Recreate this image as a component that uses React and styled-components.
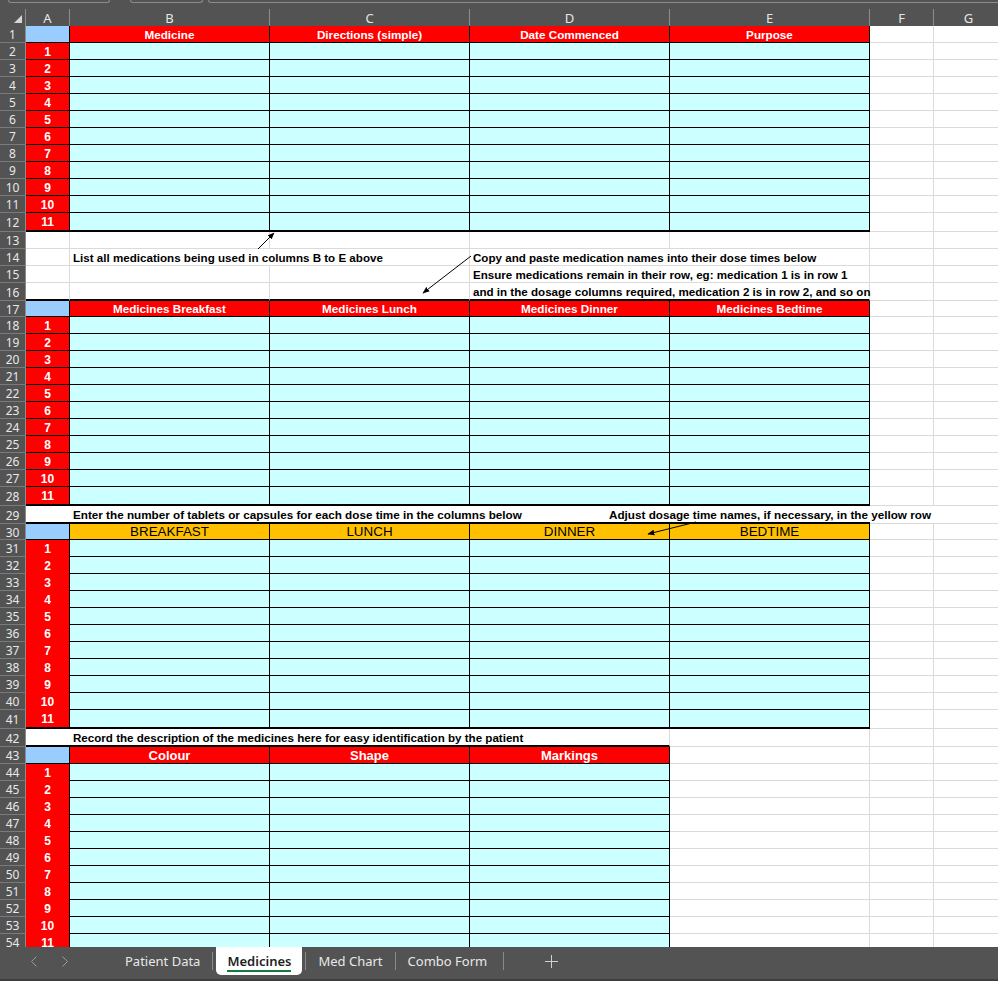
import React from 'react';
import styled, { createGlobalStyle } from 'styled-components';

// row-header | A | B | C | D | E | F | G
const GRID = '26px 44px 200px 200px 200px 200px 64px 70px';
const GRIDLINE = '#dadada';
const INK = '#000000';
const CHROME = '#535353';

const edge = (kind) => {
  if (kind === 'thick') return `2px solid ${INK}`;
  if (kind === 'thin') return `1px solid ${INK}`;
  if (kind === 'grid') return `1px solid ${GRIDLINE}`;
  return 'none';
};

const GlobalStyle = createGlobalStyle`
  html, body { margin: 0; padding: 0; background: #ffffff; overflow: hidden; }
  *, *::before, *::after { box-sizing: border-box; }
`;

const Workbook = styled.div`
  position: relative;
  width: 998px;
  height: 981px;
  overflow: hidden;
  display: flex;
  flex-direction: column;
  background: ${CHROME};
  font-family: "Liberation Sans", Arial, sans-serif;
  line-height: 1;
`;

/* lower lips of the name box / formula bar fields above the grid */
const FormulaEdge = styled.div`
  height: 9px;
  flex: none;
  display: flex;
  align-items: flex-start;
  padding-left: 8px;
  overflow: hidden;
`;

const FieldLip = styled.div`
  flex: ${(p) => (p.$w ? `0 0 ${p.$w}px` : '1 0 auto')};
  margin-left: ${(p) => p.$gap || 0}px;
  margin-right: ${(p) => (p.$w ? 0 : -12)}px;
  height: 3px;
  border: 1px solid #8b8b8b;
  border-top: none;
  border-radius: 0 0 5px 5px;
`;

const ColumnBar = styled.div`
  height: 17px;
  flex: none;
  display: grid;
  grid-template-columns: ${GRID};
  grid-template-rows: 17px;
  font-family: "Noto Sans", "Open Sans", sans-serif;
`;

const Corner = styled.div`
  display: flex;
  align-items: flex-end;
  justify-content: flex-end;
  padding: 0 3px 3px 0;
  border-right: 1px solid #8b8b8b;
`;

const ColLetter = styled.div`
  display: flex;
  align-items: center;
  justify-content: center;
  padding-top: 1px;
  color: #e6e6e6;
  font-size: 13px;
  border-right: 1px solid #8b8b8b;
`;

const Sheet = styled.div`
  flex: 1 1 auto;
  min-height: 0;
  overflow: hidden;
  background: #ffffff;
  display: flex;
  flex-direction: column;
`;

const SheetRow = styled.div`
  flex: none;
  display: grid;
  grid-template-columns: ${GRID};
  grid-template-rows: ${(p) => p.$h}px;
  height: ${(p) => p.$h}px;
`;

const RowHead = styled.div`
  min-height: 0;
  background: ${CHROME};
  color: #e8e8e8;
  font-family: "Noto Sans", "Open Sans", sans-serif;
  font-size: 12px;
  display: flex;
  align-items: center;
  justify-content: center;
  padding-top: 2px;
  border-right: 1px solid #8b8b8b;
  border-bottom: 1px solid #7a7a7a;
`;

const INDEX_FILL = { head: '#99ccff', mark: '#ff0000', blank: '#ffffff' };

const IndexCell = styled.div`
  min-height: 0;
  background: ${(p) => INDEX_FILL[p.$tone]};
  color: #ffffff;
  font-weight: 700;
  font-size: 12px;
  display: flex;
  align-items: center;
  justify-content: center;
  padding-top: 1px;
  border-right: ${(p) => edge(p.$right || 'thin')};
  border-bottom: ${(p) => edge(p.$bottom)};
`;

const HEAD_TONE = {
  red: { bg: '#ff0000', fg: '#ffffff', size: 11.7, weight: 700 },
  big: { bg: '#ff0000', fg: '#ffffff', size: 13, weight: 700 },
  gold: { bg: '#ffc000', fg: '#000000', size: 13.4, weight: 400 },
};

const HeadCell = styled.div`
  min-height: 0;
  background: ${(p) => HEAD_TONE[p.$tone].bg};
  color: ${(p) => HEAD_TONE[p.$tone].fg};
  font-size: ${(p) => HEAD_TONE[p.$tone].size}px;
  font-weight: ${(p) => HEAD_TONE[p.$tone].weight};
  display: flex;
  align-items: center;
  justify-content: center;
  padding-top: 1px;
  white-space: nowrap;
  border-right: 1px solid ${INK};
  border-bottom: 1px solid ${INK};
`;

const EntryCell = styled.div`
  min-height: 0;
  background: #ccffff;
  border-right: 1px solid ${INK};
  border-bottom: ${(p) => edge(p.$bottom || 'thin')};
`;

const BlankCell = styled.div`
  min-height: 0;
  grid-column: span ${(p) => p.$span || 1};
  background: transparent;
  border-right: ${(p) => edge(p.$right || 'grid')};
  border-bottom: ${(p) => edge(p.$bottom || 'grid')};
`;

const NoteCell = styled.div`
  min-height: 0;
  grid-column: span ${(p) => p.$span || 1};
  display: flex;
  align-items: center;
  padding: 1px 0 0 3px;
  font-size: 11.6px;
  font-weight: 700;
  color: ${INK};
  white-space: nowrap;
  border-right: ${(p) => edge(p.$right || 'grid')};
  border-bottom: ${(p) => edge(p.$bottom || 'grid')};
`;

/* a note row that keeps the B..E column rhythm so centred text can spill sideways */
const NoteTrack = styled.div`
  min-height: 0;
  grid-column: span ${(p) => p.$span};
  display: grid;
  grid-template-columns: 200px 200px 200px 200px;
  align-items: center;
  padding-top: 1px;
  font-size: 11.7px;
  font-weight: 700;
  color: ${INK};
  white-space: nowrap;
  border-bottom: ${(p) => edge(p.$bottom)};
`;

const NoteText = styled.span`
  grid-column: ${(p) => p.$col};
  justify-self: ${(p) => (p.$center ? 'center' : 'start')};
  padding-left: ${(p) => (p.$center ? 0 : 3)}px;
`;

const Callouts = styled.svg`
  position: absolute;
  left: 0;
  top: 0;
  pointer-events: none;
`;

const TabBar = styled.div`
  height: 34px;
  flex: none;
  display: flex;
  align-items: flex-start;
  background: ${CHROME};
  border-bottom: 2px solid #3e3e3e;
  font-family: "Noto Sans", "Open Sans", sans-serif;
`;

const NavGroup = styled.div`
  width: 114px;
  height: 28px;
  display: flex;
  align-items: center;
  gap: 25px;
  padding-left: 31px;
`;

const Tab = styled.div`
  height: 28px;
  margin: 0 ${(p) => (p.$active ? 2 : 0)}px;
  padding: 0 ${(p) => (p.$wide ? 15 : 11)}px 0 11px;
  display: flex;
  align-items: center;
  font-size: 13px;
  color: ${(p) => (p.$active ? '#1f1f1f' : '#e8e8e8')};
  font-weight: ${(p) => (p.$active ? 600 : 400)};
  background: ${(p) => (p.$active ? '#ffffff' : 'transparent')};
  border-radius: 0 0 5px 5px;
`;

const TabLabel = styled.span`
  line-height: 18px;
  padding-top: 2px;
  border-bottom: 2px solid ${(p) => (p.$active ? '#107c41' : 'transparent')};
`;

const TabDivider = styled.div`
  width: 1px;
  height: 18px;
  margin: 5px 1px 0;
  background: #8a8a8a;
`;

const AddSheet = styled.div`
  height: 28px;
  margin-left: 40px;
  display: flex;
  align-items: center;
`;

const Chevron = ({ flip }) => (
  <svg width="6" height="11" viewBox="0 0 6 11">
    <polyline
      points={flip ? '0.5,0.5 5.5,5.5 0.5,10.5' : '5.5,0.5 0.5,5.5 5.5,10.5'}
      fill="none"
      stroke="#9a9a9a"
      strokeWidth="1"
    />
  </svg>
);

const Blanks = ({ count, bottom }) =>
  Array.from({ length: count }, (_, i) => <BlankCell key={`b${i}`} $bottom={bottom} />);

/* one coloured block: numbered header row plus eleven entry rows */
function TableBlock({ first, headHeight, headings, tone, ruled, lastHeight, lastThick }) {
  const spare = 6 - headings.length;
  const rows = [];
  for (let i = 1; i <= 11; i += 1) {
    const last = i === 11;
    const close = last && lastThick ? 'thick' : 'thin';
    rows.push(
      <SheetRow key={i} $h={last ? lastHeight : 17}>
        <RowHead>{first + i}</RowHead>
        <IndexCell $tone="mark" $bottom={last && lastThick ? 'thick' : ruled ? 'thin' : 'none'}>
          {i}
        </IndexCell>
        {headings.map((h) => (
          <EntryCell key={h} $bottom={close} />
        ))}
        <Blanks count={spare} />
      </SheetRow>
    );
  }
  return (
    <>
      <SheetRow $h={headHeight}>
        <RowHead>{first}</RowHead>
        <IndexCell $tone="head" $bottom="thin" />
        {headings.map((h) => (
          <HeadCell key={h} $tone={tone}>
            {h}
          </HeadCell>
        ))}
        <Blanks count={spare} />
      </SheetRow>
      {rows}
    </>
  );
}

export default function App() {
  return (
    <>
      <GlobalStyle />
      <Workbook>
        <FormulaEdge>
          <FieldLip $w={102} />
          <FieldLip $w={73} $gap={20} />
          <FieldLip $gap={5} />
        </FormulaEdge>

        <ColumnBar>
          <Corner>
            <svg width="8" height="8" viewBox="0 0 8 8">
              <polygon points="8,0 8,8 0,8" fill="#d6d6d6" />
            </svg>
          </Corner>
          {['A', 'B', 'C', 'D', 'E', 'F', 'G'].map((c) => (
            <ColLetter key={c}>{c}</ColLetter>
          ))}
        </ColumnBar>

        <Sheet>
          <TableBlock
            first={1}
            headHeight={17}
            headings={['Medicine', 'Directions (simple)', 'Date Commenced', 'Purpose']}
            tone="red"
            ruled
            lastHeight={19}
            lastThick
          />

          <SheetRow $h={17}>
            <RowHead>13</RowHead>
            <BlankCell />
            <Blanks count={6} />
          </SheetRow>
          <SheetRow $h={17}>
            <RowHead>14</RowHead>
            <BlankCell />
            <NoteCell $span={2}>List all medications being used in columns B to E above</NoteCell>
            <NoteCell $span={2}>Copy and paste medication names into their dose times below</NoteCell>
            <Blanks count={2} />
          </SheetRow>
          <SheetRow $h={17}>
            <RowHead>15</RowHead>
            <BlankCell />
            <BlankCell />
            <BlankCell />
            <NoteCell $span={2}>Ensure medications remain in their row, eg: medication 1 is in row 1</NoteCell>
            <Blanks count={2} />
          </SheetRow>
          <SheetRow $h={18}>
            <RowHead>16</RowHead>
            <BlankCell $bottom="thick" />
            <BlankCell $bottom="thick" />
            <BlankCell $bottom="thick" />
            <NoteCell $span={2} $bottom="thick">
              and in the dosage columns required, medication 2 is in row 2, and so on
            </NoteCell>
            <Blanks count={2} />
          </SheetRow>

          <TableBlock
            first={17}
            headHeight={16}
            headings={['Medicines Breakfast', 'Medicines Lunch', 'Medicines Dinner', 'Medicines Bedtime']}
            tone="red"
            ruled
            lastHeight={19}
            lastThick
          />

          <SheetRow $h={18}>
            <RowHead>29</RowHead>
            <BlankCell $right="none" $bottom="thick" />
            <NoteTrack $span={4} $bottom="thick">
              <NoteText $col={1}>
                Enter the number of tablets or capsules for each dose time in the columns below
              </NoteText>
              <NoteText $col={4} $center>
                Adjust dosage time names, if necessary, in the yellow row
              </NoteText>
            </NoteTrack>
            <BlankCell $span={2} $right="none" />
          </SheetRow>

          <TableBlock
            first={30}
            headHeight={16}
            headings={['BREAKFAST', 'LUNCH', 'DINNER', 'BEDTIME']}
            tone="gold"
            lastHeight={19}
            lastThick
          />

          <SheetRow $h={18}>
            <RowHead>42</RowHead>
            <BlankCell $right="none" $bottom="thick" />
            <NoteCell $span={3} $bottom="thick">
              Record the description of the medicines here for easy identification by the patient
            </NoteCell>
            <Blanks count={3} />
          </SheetRow>

          <TableBlock
            first={43}
            headHeight={17}
            headings={['Colour', 'Shape', 'Markings']}
            tone="big"
            lastHeight={17}
          />
        </Sheet>

        <TabBar>
          <NavGroup>
            <Chevron />
            <Chevron flip />
          </NavGroup>
          <Tab>
            <TabLabel>Patient Data</TabLabel>
          </Tab>
          <TabDivider />
          <Tab $active>
            <TabLabel $active>Medicines</TabLabel>
          </Tab>
          <TabDivider />
          <Tab>
            <TabLabel>Med Chart</TabLabel>
          </Tab>
          <TabDivider />
          <Tab $wide>
            <TabLabel>Combo Form</TabLabel>
          </Tab>
          <TabDivider />
          <AddSheet>
            <svg width="13" height="13" viewBox="0 0 13 13">
              <path d="M6.5 0 V13 M0 6.5 H13" stroke="#d0d0d0" strokeWidth="1" />
            </svg>
          </AddSheet>
        </TabBar>

        <Callouts width="998" height="981" viewBox="0 0 998 981">
          <defs>
            <marker id="tip" viewBox="0 0 10 10" refX="9" refY="5" markerWidth="7" markerHeight="7" orient="auto">
              <path d="M0,1 L10,5 L0,9 z" fill="#000" />
            </marker>
          </defs>
          <line x1="258" y1="249" x2="274" y2="233" stroke="#000" strokeWidth="1" markerEnd="url(#tip)" />
          <line x1="471" y1="256" x2="423" y2="293" stroke="#000" strokeWidth="1" markerEnd="url(#tip)" />
          <line x1="696" y1="522" x2="648" y2="534" stroke="#000" strokeWidth="1" markerEnd="url(#tip)" />
        </Callouts>
      </Workbook>
    </>
  );
}
